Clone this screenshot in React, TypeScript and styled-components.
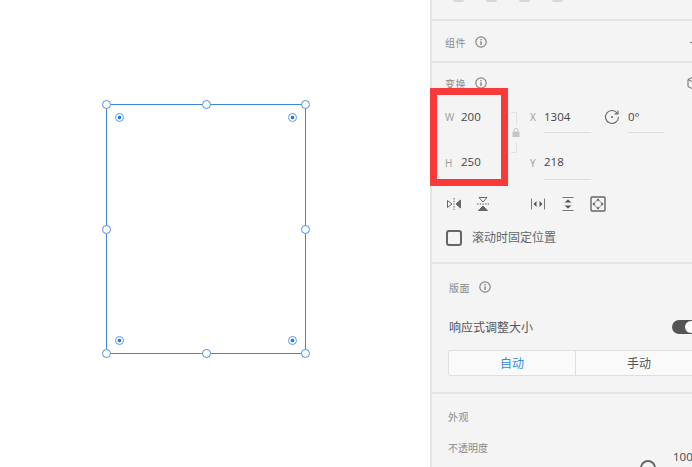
import { createGlobalStyle, styled } from "styled-components";

const GlobalStyle = createGlobalStyle`
  html, body { margin: 0; padding: 0; background: #fff; }
  body { font-family: "Open Sans", "Noto Sans CJK SC", sans-serif; }
`;

const Page = styled.div`
  display: flex;
  width: 692px;
  height: 467px;
  overflow: hidden;
  position: relative;
`;

const Canvas = styled.div`
  position: relative;
  width: 430px;
  flex: none;
  background: #fff;
`;

const Frame = styled.div`
  position: absolute;
  left: 106px;
  top: 104px;
  width: 198px;
  height: 248px;
  border: 1px solid #3b86dc;
`;

const Handle = styled.span<{ $x: number; $y: number }>`
  position: absolute;
  left: ${(p) => p.$x - 4}px;
  top: ${(p) => p.$y - 4}px;
  width: 7px;
  height: 7px;
  border: 1px solid #4a90e2;
  border-radius: 50%;
  background: #fff;
`;

const RadiusDot = styled.span<{ $x: number; $y: number }>`
  position: absolute;
  left: ${(p) => p.$x - 4}px;
  top: ${(p) => p.$y - 4}px;
  width: 7px;
  height: 7px;
  border: 1px solid #5a9be6;
  border-radius: 50%;
  background: radial-gradient(circle, #2f7bd6 0 1.6px, #fff 2.2px);
`;

const Panel = styled.div`
  width: 262px;
  flex: none;
  box-sizing: border-box;
  border-left: 2px solid #e4e4e4;
  background: #f4f4f4;
  color: #444;
  display: flex;
  flex-direction: column;
`;

const Section = styled.section<{ $height: number }>`
  height: ${(p) => p.$height}px;
  flex: none;
  border-bottom: 2px solid #e4e4e4;
  overflow: hidden;
  box-sizing: content-box;
`;

const SwatchRow = styled.div`
  display: flex;
  gap: 22px;
  padding-left: 21px;
`;

const Swatch = styled.span`
  width: 11px;
  height: 2px;
  background: #d8d8d8;
  border-radius: 0 0 2px 2px;
`;

const Heading = styled.div<{ $inset?: number; $top: number }>`
  display: flex;
  align-items: center;
  gap: 9px;
  height: 16px;
  margin-top: ${(p) => p.$top}px;
  padding-left: ${(p) => p.$inset ?? 13}px;
  font-size: 10px;
  color: #8a8a8a;
  letter-spacing: 0.4px;
`;

const PlusMark = styled.span`
  margin-left: auto;
  margin-right: -6px;
  font-size: 14px;
  color: #666;
`;

const CubeMark = styled.span`
  margin-left: auto;
  margin-right: -10px;
  display: flex;
`;

const FieldRows = styled.div`
  display: grid;
  grid-template-columns: 85px 61px 37px 36px;
  grid-template-rows: 45px 45px;
  padding-left: 13px;
  position: relative;
`;

const Field = styled.div<{ $offset?: number; $tall?: boolean }>`
  display: flex;
  align-items: center;
  height: ${(p) => (p.$tall ? 35 : 33)}px;
  margin-top: 9px;
  margin-left: ${(p) => p.$offset ?? 0}px;
`;

const FieldLabel = styled.span<{ $width: number }>`
  width: ${(p) => p.$width}px;
  flex: none;
  font-size: 10px;
  color: #999;
`;

const Value = styled.span<{ $underline?: boolean; $tall?: boolean }>`
  flex: 1;
  align-self: stretch;
  display: flex;
  align-items: center;
  box-sizing: border-box;
  padding-bottom: ${(p) => (p.$tall ? 2 : 0)}px;
  font-size: 11.5px;
  color: #444;
  border-bottom: ${(p) => (p.$underline ? "1px solid #dedede" : "1px solid transparent")};
`;

const Bracket = styled.span<{ $bottom?: boolean }>`
  position: absolute;
  left: 79px;
  top: ${(p) => (p.$bottom ? "51px" : "21px")};
  width: 5px;
  height: ${(p) => (p.$bottom ? 10 : 12)}px;
  border-right: 1px solid #e2e2e2;
  ${(p) => (p.$bottom ? "border-bottom" : "border-top")}: 1px solid #e2e2e2;
`;

const LockSpot = styled.span`
  position: absolute;
  left: 80px;
  top: 37px;
  display: flex;
  color: #c4c4c4;
`;

const ToolRow = styled.div`
  display: flex;
  align-items: center;
  height: 20px;
  margin-top: 13px;
  padding-left: 14px;
`;

const Tool = styled.span<{ $after?: number }>`
  display: flex;
  width: 16px;
  height: 16px;
  margin-right: ${(p) => p.$after ?? 0}px;
`;

const CheckRow = styled.label`
  display: flex;
  align-items: center;
  gap: 10px;
  margin-top: 16px;
  padding-left: 14px;
  font-size: 12px;
  line-height: 16px;
  color: #666;
`;

const CheckBox = styled.span`
  width: 12px;
  height: 12px;
  border: 2px solid #666;
  border-radius: 3px;
  flex: none;
`;

const ToggleRow = styled.div`
  display: flex;
  align-items: center;
  justify-content: space-between;
  height: 16px;
  margin-top: 24px;
  padding-left: 17px;
  font-size: 12px;
  color: #555;
`;

const Toggle = styled.span`
  width: 30px;
  height: 14px;
  margin-right: -10px;
  border-radius: 7px;
  background: #555;
  position: relative;
  &::after {
    content: "";
    position: absolute;
    left: 13px;
    top: 1px;
    width: 12px;
    height: 12px;
    border-radius: 50%;
    background: #fff;
  }
`;

const Segments = styled.div`
  display: flex;
  width: 255px;
  height: 26px;
  box-sizing: border-box;
  margin: 15px 0 0 16px;
  border: 1px solid #dfdfdf;
  border-radius: 2px;
  background: #fafafa;
`;

const Segment = styled.span<{ $active?: boolean }>`
  flex: 1;
  display: flex;
  align-items: center;
  justify-content: center;
  font-size: 12px;
  color: ${(p) => (p.$active ? "#2b8fe0" : "#555")};
  & + & {
    border-left: 1px solid #dfdfdf;
  }
`;

const Appearance = styled.section`
  flex: 1;
  overflow: hidden;
`;

const OpacityLabel = styled.div`
  margin-top: 18px;
  padding-left: 16px;
  font-size: 10px;
  color: #8a8a8a;
  height: 13px;
  line-height: 13px;
`;

const SliderRow = styled.div`
  display: flex;
  align-items: flex-start;
  height: 40px;
  margin-top: -2px;
  padding-left: 208px;
`;

const Knob = styled.span`
  width: 12px;
  height: 12px;
  margin-top: 7px;
  flex: none;
  border: 2px solid #666;
  border-radius: 50%;
`;

const SliderValue = styled.span`
  margin-left: 17px;
  margin-top: -4px;
  font-size: 11.5px;
  color: #444;
`;

const RedBox = styled.div`
  position: absolute;
  left: 430px;
  top: 88px;
  width: 78px;
  height: 98px;
  box-sizing: border-box;
  border: 7px solid #f93a3a;
`;

const InfoIcon = () => (
  <svg width="12" height="12" viewBox="0 0 12 12" fill="none" stroke="#858585">
    <circle cx="6" cy="6" r="5.2" strokeWidth="1.2" />
    <path d="M6 5.2V9" strokeWidth="1.4" />
    <path d="M6 3v1.3" strokeWidth="1.4" />
  </svg>
);

const RotateIcon = () => (
  <svg width="16" height="16" viewBox="0 0 16 16" fill="none" stroke="#666" strokeWidth="1.1">
    <path d="M13.5 4.5A6.5 6.5 0 1 0 14.5 8" />
    <path d="M14 1.5v3.4h-3.4" />
    <circle cx="8" cy="8" r="1" fill="#666" stroke="none" />
  </svg>
);

const CubeIcon = () => (
  <svg width="16" height="16" viewBox="0 0 16 16" fill="none" stroke="#666" strokeWidth="1">
    <path d="M8 1.5l6 3v7l-6 3-6-3v-7z" />
    <path d="M2 4.5l6 3 6-3M8 7.5v7" />
  </svg>
);

const LockIcon = () => (
  <svg width="8" height="9" viewBox="0 0 8 9" fill="currentColor">
    <rect x="0.5" y="3.5" width="7" height="5.5" />
    <path d="M2 3.5V2.4a2 2 0 0 1 4 0V3.5" fill="none" stroke="currentColor" />
  </svg>
);

const FlipHIcon = () => (
  <svg viewBox="0 0 16 16" fill="none" stroke="#666">
    <path d="M8 2v12" strokeDasharray="1.5 1.2" />
    <path d="M1.5 4.5v7L6 8z" />
    <path d="M14.5 4v8L10 8z" fill="#666" />
  </svg>
);

const FlipVIcon = () => (
  <svg viewBox="0 0 16 16" fill="none" stroke="#666">
    <path d="M2 8h12" strokeDasharray="1.5 1.2" />
    <path d="M4 1.5h8L8 6z" />
    <path d="M3.5 14.5h9L8 10z" fill="#666" />
  </svg>
);

const SpreadHIcon = () => (
  <svg viewBox="0 0 16 16" fill="#555" stroke="#777">
    <path d="M1.5 2.5v11M14.5 2.5v11" fill="none" />
    <path d="M6.5 5v6L3.5 8zM9.5 5v6L12.5 8z" stroke="none" />
  </svg>
);

const SpreadVIcon = () => (
  <svg viewBox="0 0 16 16" fill="#555" stroke="#777">
    <path d="M2.5 1.5h11M2.5 14.5h11" fill="none" />
    <path d="M4.5 6.5h7L8 3.5zM4.5 9.5h7L8 12.5z" stroke="none" />
  </svg>
);

const FitIcon = () => (
  <svg viewBox="0 0 16 16" fill="#555" stroke="#666">
    <rect x="1" y="1" width="14" height="14" rx="1" fill="none" strokeWidth="1.4" />
    <circle cx="8" cy="8" r="3.5" fill="none" stroke="#aaa" />
    <path d="M6 4.5h4L8 2.5zM6 11.5h4L8 13.5zM4.5 6v4L2.5 8zM11.5 6v4L13.5 8z" stroke="none" />
  </svg>
);

export default function App() {
  const handles = [
    [106, 104],
    [206, 104],
    [305, 104],
    [106, 229],
    [305, 229],
    [106, 353],
    [206, 353],
    [305, 353]
  ];
  const dots = [
    [119, 117],
    [292, 117],
    [119, 340],
    [292, 340]
  ];

  return (
    <>
      <GlobalStyle />
      <Page>
        <Canvas>
          <Frame />
          {handles.map(([x, y]) => (
            <Handle key={`${x}-${y}`} $x={x} $y={y} />
          ))}
          {dots.map(([x, y]) => (
            <RadiusDot key={`${x}-${y}`} $x={x} $y={y} />
          ))}
        </Canvas>
        <Panel>
          <Section $height={19}>
            <SwatchRow>
              <Swatch />
              <Swatch />
              <Swatch />
              <Swatch />
            </SwatchRow>
          </Section>
          <Section $height={40}>
            <Heading $top={13}>
              组件 <InfoIcon />
              <PlusMark>+</PlusMark>
            </Heading>
          </Section>
          <Section $height={199}>
            <Heading $top={12}>
              变换 <InfoIcon />
              <CubeMark>
                <CubeIcon />
              </CubeMark>
            </Heading>
            <FieldRows>
              <Bracket />
              <LockSpot>
                <LockIcon />
              </LockSpot>
              <Bracket $bottom />
              <Field>
                <FieldLabel $width={16}>W</FieldLabel>
                <Value>200</Value>
              </Field>
              <Field>
                <FieldLabel $width={14}>X</FieldLabel>
                <Value $underline>1304</Value>
              </Field>
              <Field $offset={13}>
                <RotateIcon />
              </Field>
              <Field>
                <Value $underline>0°</Value>
              </Field>
              <Field $tall>
                <FieldLabel $width={16}>H</FieldLabel>
                <Value $tall>250</Value>
              </Field>
              <Field $tall>
                <FieldLabel $width={14}>Y</FieldLabel>
                <Value $underline $tall>
                  218
                </Value>
              </Field>
            </FieldRows>
            <ToolRow>
              <Tool $after={13}>
                <FlipHIcon />
              </Tool>
              <Tool $after={39}>
                <FlipVIcon />
              </Tool>
              <Tool $after={14}>
                <SpreadHIcon />
              </Tool>
              <Tool $after={14}>
                <SpreadVIcon />
              </Tool>
              <Tool>
                <FitIcon />
              </Tool>
            </ToolRow>
            <CheckRow>
              <CheckBox />
              滚动时固定位置
            </CheckRow>
          </Section>
          <Section $height={128}>
            <Heading $top={15} $inset={17}>
              版面 <InfoIcon />
            </Heading>
            <ToggleRow>
              响应式调整大小
              <Toggle />
            </ToggleRow>
            <Segments>
              <Segment $active>自动</Segment>
              <Segment>手动</Segment>
            </Segments>
          </Section>
          <Appearance>
            <Heading $top={14} $inset={16}>
              外观
            </Heading>
            <OpacityLabel>不透明度</OpacityLabel>
            <SliderRow>
              <Knob />
              <SliderValue>100%</SliderValue>
            </SliderRow>
          </Appearance>
        </Panel>
        <RedBox />
      </Page>
    </>
  );
}
